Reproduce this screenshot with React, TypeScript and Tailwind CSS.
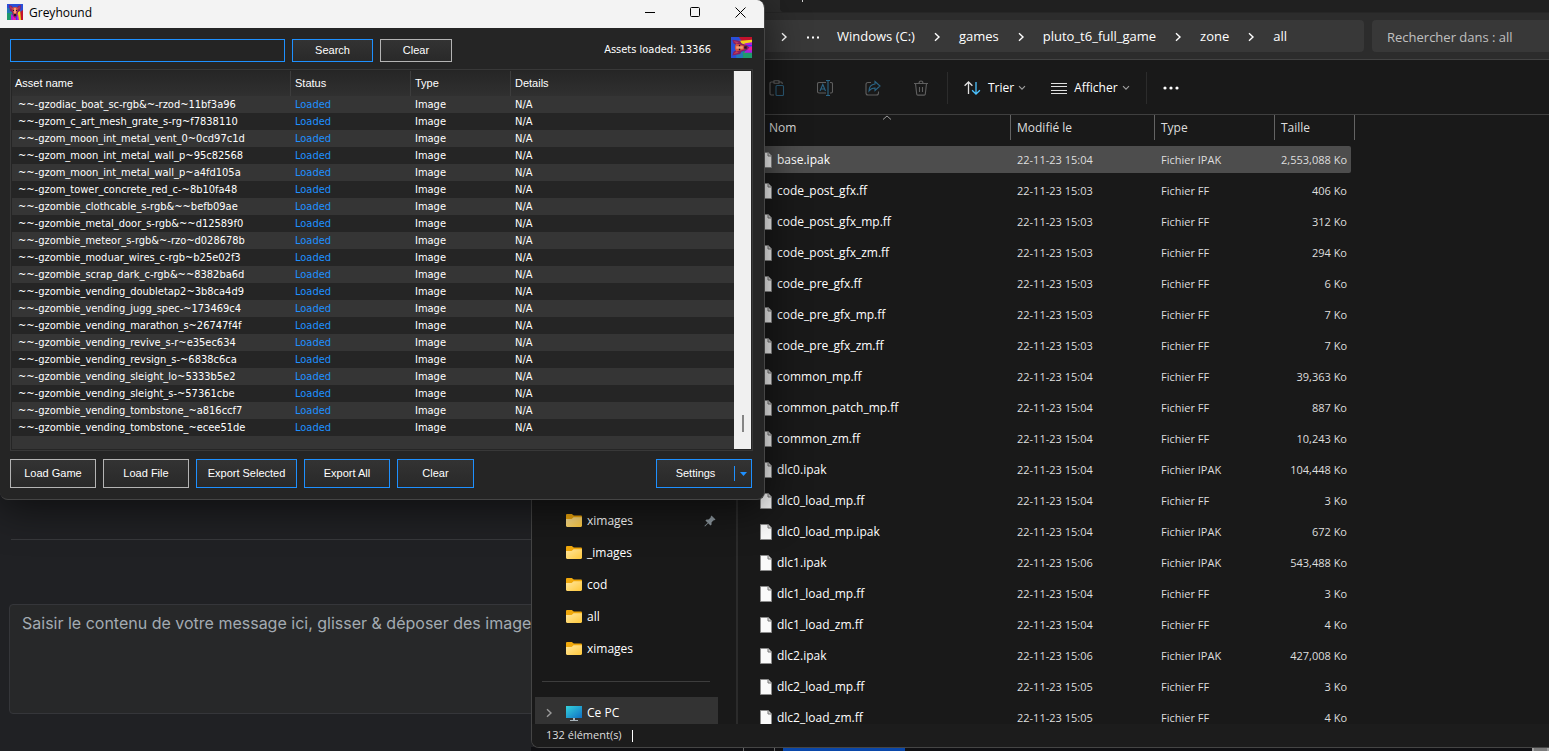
import { ReactNode } from "react";

const assets = [
  "~~-gzodiac_boat_sc-rgb&~-rzod~11bf3a96",
  "~~-gzom_c_art_mesh_grate_s-rg~f7838110",
  "~~-gzom_moon_int_metal_vent_0~0cd97c1d",
  "~~-gzom_moon_int_metal_wall_p~95c82568",
  "~~-gzom_moon_int_metal_wall_p~a4fd105a",
  "~~-gzom_tower_concrete_red_c-~8b10fa48",
  "~~-gzombie_clothcable_s-rgb&~~befb09ae",
  "~~-gzombie_metal_door_s-rgb&~~d12589f0",
  "~~-gzombie_meteor_s-rgb&~-rzo~d028678b",
  "~~-gzombie_moduar_wires_c-rgb~b25e02f3",
  "~~-gzombie_scrap_dark_c-rgb&~~8382ba6d",
  "~~-gzombie_vending_doubletap2~3b8ca4d9",
  "~~-gzombie_vending_jugg_spec-~173469c4",
  "~~-gzombie_vending_marathon_s~26747f4f",
  "~~-gzombie_vending_revive_s-r~e35ec634",
  "~~-gzombie_vending_revsign_s-~6838c6ca",
  "~~-gzombie_vending_sleight_lo~5333b5e2",
  "~~-gzombie_vending_sleight_s-~57361cbe",
  "~~-gzombie_vending_tombstone_~a816ccf7",
  "~~-gzombie_vending_tombstone_~ecee51de",
];

const files = [
  { name: "base.ipak", date: "22-11-23 15:04", type: "Fichier IPAK", size: "2,553,088 Ko" },
  { name: "code_post_gfx.ff", date: "22-11-23 15:03", type: "Fichier FF", size: "406 Ko" },
  { name: "code_post_gfx_mp.ff", date: "22-11-23 15:03", type: "Fichier FF", size: "312 Ko" },
  { name: "code_post_gfx_zm.ff", date: "22-11-23 15:03", type: "Fichier FF", size: "294 Ko" },
  { name: "code_pre_gfx.ff", date: "22-11-23 15:03", type: "Fichier FF", size: "6 Ko" },
  { name: "code_pre_gfx_mp.ff", date: "22-11-23 15:03", type: "Fichier FF", size: "7 Ko" },
  { name: "code_pre_gfx_zm.ff", date: "22-11-23 15:03", type: "Fichier FF", size: "7 Ko" },
  { name: "common_mp.ff", date: "22-11-23 15:04", type: "Fichier FF", size: "39,363 Ko" },
  { name: "common_patch_mp.ff", date: "22-11-23 15:04", type: "Fichier FF", size: "887 Ko" },
  { name: "common_zm.ff", date: "22-11-23 15:04", type: "Fichier FF", size: "10,243 Ko" },
  { name: "dlc0.ipak", date: "22-11-23 15:04", type: "Fichier IPAK", size: "104,448 Ko" },
  { name: "dlc0_load_mp.ff", date: "22-11-23 15:04", type: "Fichier FF", size: "3 Ko" },
  { name: "dlc0_load_mp.ipak", date: "22-11-23 15:04", type: "Fichier IPAK", size: "672 Ko" },
  { name: "dlc1.ipak", date: "22-11-23 15:06", type: "Fichier IPAK", size: "543,488 Ko" },
  { name: "dlc1_load_mp.ff", date: "22-11-23 15:04", type: "Fichier FF", size: "3 Ko" },
  { name: "dlc1_load_zm.ff", date: "22-11-23 15:04", type: "Fichier FF", size: "4 Ko" },
  { name: "dlc2.ipak", date: "22-11-23 15:06", type: "Fichier IPAK", size: "427,008 Ko" },
  { name: "dlc2_load_mp.ff", date: "22-11-23 15:05", type: "Fichier FF", size: "3 Ko" },
  { name: "dlc2_load_zm.ff", date: "22-11-23 15:05", type: "Fichier FF", size: "4 Ko" },
];

const crumbs = ["Windows (C:)", "games", "pluto_t6_full_game", "zone", "all"];

const folders = [
  { name: "ximages", pinned: true },
  { name: "_images" },
  { name: "cod" },
  { name: "all" },
  { name: "ximages" },
];

function HoundLogo({ className }: { className: string }) {
  return (
    <svg className={className} viewBox="0 0 16 16" aria-hidden="true">
      <rect width="16" height="16" fill="#2a4fd8" />
      <path d="M0 4h4l1 5H0z" fill="#2378b8" />
      <path d="M0 9h5l1 7H0z" fill="#1f9a6c" />
      <path d="M13 8l3-2v10h-3z" fill="#c3122c" />
      <path d="M10 10l3-5 1 11h-3z" fill="#f2d21b" />
      <path d="M4 10l4 3 3-3 1 6H4z" fill="#b01be0" />
      <path d="M6 13h2l1 3H6z" fill="#f01f9a" />
      <path d="M9 12h1v4H9z" fill="#3a3af0" />
      <path d="M2 1l3 1 1 2h4l1-2 3-1-1 6-2 1-1 4-2 2-2-2-1-4-2-1z" fill="#8a1f62" />
      <path d="M5 4l2-1h2l2 1-1 4-1 3-1 1-1-1-1-3z" fill="#d8553f" />
      <path d="M7 4h2v5H7z" fill="#f0a07a" />
      <path d="M6 6h1v1H6zM9 6h1v1H9zM7 10h2v2H7z" fill="#20102a" />
      <path d="M3 2l2 2-1 2zM13 2l-2 2 1 2z" fill="#c0405a" />
    </svg>
  );
}

function Chevron({ className = "" }: { className?: string }) {
  return (
    <svg className={`shrink-0 ${className}`} width="8" height="10" viewBox="0 0 8 10" fill="none" stroke="currentColor" strokeWidth="1.4">
      <path d="M2 1.2L6 5 2 8.8" />
    </svg>
  );
}

function ChevronSmall() {
  return (
    <svg width="8" height="6" viewBox="0 0 8 6" fill="none" stroke="#a0a0a0" strokeWidth="1.1">
      <path d="M1 1.2l3 3 3-3" />
    </svg>
  );
}

function FileIcon() {
  return (
    <svg className="shrink-0" width="12" height="16" viewBox="0 0 12 16">
      <path d="M.5.5h7.700l3.300 3.300v11.700H.5z" fill="#fafafa" stroke="#8b8b8b" />
      <path d="M8 .8V4h3.200" fill="#d6d6d6" stroke="#777" />
    </svg>
  );
}

function FolderIcon() {
  return (
    <svg className="shrink-0" width="16" height="14" viewBox="0 0 16 14">
      <defs>
        <linearGradient id="folder" x1="0" y1="0" x2="1" y2="1">
          <stop offset="0" stopColor="#ffe7a0" />
          <stop offset="1" stopColor="#ffc83a" />
        </linearGradient>
      </defs>
      <path d="M0 1.200C0 .5.5 0 1.200 0h4.600l2 1.600h7c.7 0 1.200.5 1.200 1.200V7H0z" fill="#f0a80c" />
      <path d="M0 5h5.600l2-1.800H16v8.600c0 .7-.5 1.200-1.200 1.200H1.200C.5 13 0 12.500 0 11.800z" fill="url(#folder)" />
    </svg>
  );
}

function ToolIcon({ label, children }: { label: string; children: ReactNode }) {
  return (
    <button type="button" aria-label={label} className="flex h-8 w-12 items-center justify-center">
      <svg width="16" height="16" viewBox="0 0 16 16" fill="none" stroke="#5f5f5f" strokeWidth="1.1">
        {children}
      </svg>
    </button>
  );
}

function FlatButton({ children, accent, className }: { children: ReactNode; accent?: boolean; className: string }) {
  return (
    <button
      type="button"
      className={`border bg-linear-to-b from-[#333] to-[#292929] text-center font-['Liberation_Sans',sans-serif] text-[11px] ${
        accent ? "border-[#1e90ff]" : "border-[#b4b4b4]"
      } ${className}`}
    >
      {children}
    </button>
  );
}

function ForumPage() {
  return (
    <div className="flex h-full flex-col justify-end bg-[#202124] px-[9px] pb-[37px] font-['Inter',sans-serif]">
      <hr className="ml-0.5 border-[#37383b]" />
      <textarea
        aria-label="Message"
        rows={4}
        placeholder="Saisir le contenu de votre message ici, glisser & déposer des images"
        className="mt-16 h-[110px] w-full resize-none rounded border border-[#35363a] bg-[#272829] px-3 py-1.5 text-base text-[#a3abb2] placeholder:text-[#a3abb2]"
      />
    </div>
  );
}

function Explorer() {
  return (
    <section className="absolute top-0 right-0 bottom-[3px] left-[531px] flex flex-col overflow-hidden rounded-bl-lg border-b border-l border-[#454545] bg-[#191919] font-['Open_Sans',sans-serif] text-xs text-white">
      <div className="flex h-3 shrink-0 bg-[#2c2c2c]">
        <div className="w-[248px]" />
        <div className="flex-1 rounded-bl bg-[#202020] pl-[22px]">
          <div className="h-0.5 w-px bg-[#cfcfcf]" />
        </div>
      </div>
      <div className="flex h-12 shrink-0 items-center gap-2 border-t border-b border-t-[#262626] border-b-[#434343] bg-[#2c2c2c] pl-[200px]">
        <nav className="flex h-8 flex-1 items-center rounded bg-[#383838] pt-0.5 pl-12 text-[13px] whitespace-nowrap">
          <Chevron className="mr-[19px]" />
          <svg width="12" height="3" viewBox="0 0 12 3" fill="#fff">
            <path d="M0 .5h2v2H0zM5 .5h2v2H5zM10 .5h2v2h-2z" />
          </svg>
          <ol className="ml-[18px] flex items-center">
            {crumbs.map((c, i) => (
              <li key={c} className="flex items-center">
                {i > 0 && <Chevron className="mx-[18px]" />}
                <a href="#">{c}</a>
              </li>
            ))}
          </ol>
        </nav>
        <input
          type="search"
          aria-label="Rechercher"
          placeholder="Rechercher dans : all"
          className="h-8 w-[177px] rounded-l bg-[#383838] pt-0.5 pl-[15px] text-[13px] placeholder:text-[#c0c0c0]"
        />
      </div>

      <div className="flex h-[55px] shrink-0 items-center border-b border-[#3f3f3f] pt-0.5 pl-[221px] whitespace-nowrap">
        <ToolIcon label="Coller">
          <path d="M5 2H2.200C1.500 2 1 2.500 1 3.200v10.600c0 .7.5 1.200 1.200 1.200H5M10 2h2c.7 0 1.200.5 1.200 1.200V4M5 .8h5v2.400H5z" />
          <rect x="7" y="5.500" width="7.500" height="10" rx="1" stroke="#2b5a75" />
        </ToolIcon>
        <ToolIcon label="Renommer">
          <path d="M9 2.500H2C1 2.500.5 3 .5 4v7.500c0 1 .5 1.500 1.500 1.500h7M13 2.500h1c1 0 1.500.5 1.500 1.500v7.500c0 1-.5 1.500-1.500 1.500h-1" />
          <path d="M3 11l2.800-6.500L8.500 11M4 9h3.600M9 .5h4M9 15.500h4M11 .5v15" stroke="#2b6586" />
        </ToolIcon>
        <ToolIcon label="Partager">
          <path d="M6 2.500H3c-1.200 0-2 .8-2 2V13c0 1.200.8 2 2 2h8.500c1.200 0 2-.8 2-2v-1.500" />
          <path d="M10 1.500L15 6l-5 4.500V8C7.500 8 5.500 8.800 4 11c0-4 2.200-6.500 6-7z" stroke="#2b6586" />
        </ToolIcon>
        <ToolIcon label="Supprimer">
          <path d="M1 3.500h14M2.500 3.500l1.200 10.600c.1.600.5 1 1.200 1h6.200c.7 0 1.100-.4 1.200-1l1.200-10.600M6 3.500c0-3.300 4-3.300 4 0M6.500 7v5M9.500 7v5" />
        </ToolIcon>
        <div className="ml-0.5 h-8 w-px bg-[#2c2c2c]" />
        <button type="button" className="ml-4 flex h-8 items-center">
          <svg width="17" height="14" viewBox="0 0 17 14" fill="none" strokeWidth="1.3">
            <path d="M4.500 13V1M.6 4.800L4.500 1l3.900 3.800" stroke="#e0e0e0" />
            <path d="M12 1v12M8.100 9.200L12 13l3.900-3.800" stroke="#4cc2ff" />
          </svg>
          <span className="mr-1 ml-[7px]">Trier</span>
          <ChevronSmall />
        </button>
        <button type="button" className="ml-[25px] flex h-8 items-center">
          <svg width="16" height="11" viewBox="0 0 16 11" stroke="#e0e0e0">
            <path d="M0 .5h16M0 3.500h16M0 7.500h16M0 10.500h16" />
          </svg>
          <span className="mr-1 ml-[7px]">Afficher</span>
          <ChevronSmall />
        </button>
        <div className="ml-4 h-8 w-px bg-[#2c2c2c]" />
        <button type="button" aria-label="Plus" className="ml-4 flex h-8 items-center">
          <svg width="16" height="4" viewBox="0 0 16 4" fill="#fff">
            <circle cx="2" cy="2" r="1.6" />
            <circle cx="8" cy="2" r="1.6" />
            <circle cx="14" cy="2" r="1.6" />
          </svg>
        </button>
      </div>

      <div className="flex min-h-0 flex-1">
        <aside className="flex w-[206px] shrink-0 flex-col justify-end border-r-2 border-[#2b2b2b] pr-[18px]">
          {folders.map((f, i) => (
            <a key={i} href="#" className="flex h-8 items-center gap-[5px] pr-0.5 pl-[34px]">
              <FolderIcon />
              <span className="flex-1">{f.name}</span>
              {f.pinned && (
                <svg width="12" height="12" viewBox="0 0 12 12" fill="#8c979e">
                  <path d="M7.500.5l4 4-1.200.8-1 .2-1.800 2 .1 2L6.500 10.600 4.200 8.300 1 11.600l-.6-.6 3.300-3.200L1.400 5.500l1.100-1.100 2 .1 2-1.800.2-1z" />
                </svg>
              )}
            </a>
          ))}
          <hr className="mt-4 mr-2 ml-2.5 border-[#3d3d3d]" />
          <a href="#" className="mt-[15px] ml-[3px] flex h-[27px] items-center bg-[#333] pt-1 pl-2.5">
            <Chevron className="mr-[13px] text-[#9a9a9a]" />
            <svg className="shrink-0" width="16" height="16" viewBox="0 0 16 16">
              <defs>
                <linearGradient id="screen" x1="0" y1="0" x2="1" y2="1">
                  <stop offset="0" stopColor="#35d3dc" />
                  <stop offset="1" stopColor="#0f6fc4" />
                </linearGradient>
              </defs>
              <path d="M0 1h16v12H0z" fill="url(#screen)" />
              <path d="M7 13h2v2H7zM4 15h8v1H4z" fill="#a9b4bb" />
            </svg>
            <span className="ml-[5px]">Ce PC</span>
          </a>
        </aside>

        <div className="min-w-0 flex-1 overflow-hidden">
          <table className="w-[617px] table-fixed border-separate border-spacing-0 text-left">
            <colgroup>
              <col className="w-[273px]" />
              <col className="w-36" />
              <col className="w-[120px]" />
              <col className="w-20" />
            </colgroup>
            <thead className="text-[#dedede]">
              <tr className="h-[29px]">
                <th className="relative p-0 align-top font-normal">
                  <div className="h-[25px] border-r border-[#636363] pl-[31px] leading-[25px]">Nom</div>
                  <svg className="absolute top-0 left-[144px]" width="10" height="6" viewBox="0 0 10 6" fill="none" stroke="#9a9a9a">
                    <path d="M1 4.500l4-3.500 4 3.500" />
                  </svg>
                </th>
                <th className="p-0 align-top font-normal">
                  <div className="h-[25px] border-r border-[#636363] pl-1.5 leading-[25px]">Modifié le</div>
                </th>
                <th className="p-0 align-top font-normal">
                  <div className="h-[25px] border-r border-[#636363] pl-1.5 leading-[25px]">Type</div>
                </th>
                <th className="p-0 align-top font-normal">
                  <div className="h-[25px] border-r border-[#636363] pl-1.5 leading-[25px]">Taille</div>
                </th>
              </tr>
            </thead>
            <tbody>
              {files.map((f, i) => {
                const bg = i === 0 ? "bg-[#4d4d4d]" : "";
                return (
                  <tr key={f.name} className="h-[31px] whitespace-nowrap">
                    <td className="p-0">
                      <div className={`flex h-[27px] items-center gap-[5px] pl-[22px] ${bg}`}>
                        <FileIcon />
                        {f.name}
                      </div>
                    </td>
                    <td className="p-0 text-[11px] text-[#dedede]">
                      <div className={`h-[27px] pl-1.5 leading-[27px] ${bg}`}>{f.date}</div>
                    </td>
                    <td className="p-0 text-[11px] text-[#dedede]">
                      <div className={`h-[27px] pl-1.5 leading-[27px] ${bg}`}>{f.type}</div>
                    </td>
                    <td className="p-0 text-right text-[11px] text-[#dedede]">
                      <div className={`mr-1 h-[27px] rounded-r-xs pr-1 leading-[27px] ${bg}`}>{f.size}</div>
                    </td>
                  </tr>
                );
              })}
            </tbody>
          </table>
        </div>
      </div>

      <footer className="flex h-[23px] shrink-0 items-center gap-2.5 bg-[#1c1c1c] pl-3.5 text-[11px] text-[#dedede]">
        132 élément(s)
        <span className="h-3 w-px bg-white" />
      </footer>
    </section>
  );
}

function Greyhound() {
  return (
    <section className="absolute top-0 left-0 w-[765px] overflow-hidden rounded-tr-lg rounded-b-lg border-r border-b border-[#454545] bg-[#252525] font-['DejaVu_Sans_Condensed','DejaVu_Sans',sans-serif] text-[11px] text-white shadow-[0_8px_40px_rgba(0,0,0,0.6)]">
      <header className="flex h-7 items-center bg-[#f3f3f3] pr-[18px] pb-1 pl-[7px] text-black">
        <HoundLogo className="size-4" />
        <h1 className="ml-1.5 flex-1 pt-0.5 font-['Open_Sans',sans-serif] text-xs">Greyhound</h1>
        <div className="flex items-center gap-[35px]">
          <button type="button" aria-label="Minimize">
            <svg width="10" height="11" viewBox="0 0 10 11" stroke="#000">
              <path d="M0 5.500h10" />
            </svg>
          </button>
          <button type="button" aria-label="Maximize">
            <svg width="10" height="10" viewBox="0 0 10 10" fill="none" stroke="#000">
              <rect x=".5" y=".5" width="9" height="9" rx="1" />
            </svg>
          </button>
          <button type="button" aria-label="Close">
            <svg width="11" height="11" viewBox="0 0 11 11" stroke="#000">
              <path d="M.5.5l10 10M10.500.5l-10 10" />
            </svg>
          </button>
        </div>
      </header>

      <form className="flex items-start pt-[11px] pr-3 pl-2.5">
        <input type="text" aria-label="Search assets" className="h-[23px] w-[275px] border border-[#1e90ff] bg-[#242424] px-1" />
        <FlatButton accent className="ml-[7px] h-[23px] w-[81px]">Search</FlatButton>
        <FlatButton className="ml-[7px] h-[23px] w-[72px]">Clear</FlatButton>
        <span className="ml-auto pt-[3px]">Assets loaded: 13366</span>
        <HoundLogo className="-mt-0.5 ml-5 size-[21px] -rotate-90" />
      </form>

      <div className="mr-[11px] ml-2.5 mt-[7px] flex border border-[#383838] p-px">
        <table className="flex-1 table-fixed border-separate border-spacing-0 text-left">
          <colgroup>
            <col className="w-[279px]" />
            <col className="w-[120px]" />
            <col className="w-[100px]" />
            <col />
          </colgroup>
          <thead>
            <tr className="h-[25px] bg-linear-to-b from-[#262626] to-[#303030] font-['Liberation_Sans',sans-serif]">
              <th className="border-r border-[#3d3d3d] py-0 pr-0 pl-[3px] font-normal">Asset name</th>
              <th className="border-r border-[#3d3d3d] py-0 pr-0 pl-1 font-normal">Status</th>
              <th className="border-r border-[#3d3d3d] py-0 pr-0 pl-1 font-normal">Type</th>
              <th className="border-r border-[#3d3d3d] py-0 pr-0 pl-1 font-normal">Details</th>
            </tr>
          </thead>
          <tbody>
            {assets.map((name) => (
              <tr key={name} className="h-[17px] leading-[17px] whitespace-nowrap odd:bg-[#353535]">
                <td className="py-0 pr-0 pl-1.5">{name}</td>
                <td className="py-0 pr-0 pl-1 text-[#1e90ff]">Loaded</td>
                <td className="py-0 pr-0 pl-1">Image</td>
                <td className="py-0 pr-0 pl-1">N/A</td>
              </tr>
            ))}
            <tr className="h-[13px] bg-[#353535]">
              <td colSpan={4} className="p-0" />
            </tr>
          </tbody>
        </table>
        <div className="flex w-[17px] flex-col items-center justify-end bg-[#f0f0f0] pb-[17px]">
          <div className="h-[17px] w-0.5 bg-[#858585]" />
        </div>
      </div>

      <div className="flex gap-[7px] px-2.5 pt-2 pb-[11px]">
        <FlatButton className="h-[29px] w-[86px]">Load Game</FlatButton>
        <FlatButton className="h-[29px] w-[86px]">Load File</FlatButton>
        <FlatButton accent className="h-[29px] w-[101px]">Export Selected</FlatButton>
        <FlatButton accent className="h-[29px] w-[86px]">Export All</FlatButton>
        <FlatButton accent className="h-[29px] w-[77px]">Clear</FlatButton>
        <FlatButton accent className="mr-0.5 ml-auto flex h-[29px] w-24 items-center">
          <span className="flex-1">Settings</span>
          <span className="flex h-[15px] w-[17px] items-center justify-center border-l border-[#1e90ff]">
            <svg width="7" height="4" viewBox="0 0 7 4" fill="#1e90ff">
              <path d="M0 0h7L3.500 4z" />
            </svg>
          </span>
        </FlatButton>
      </div>
    </section>
  );
}

export default function App() {
  return (
    <main className="relative h-screen overflow-hidden bg-[#202124]">
      <div className="h-full w-[600px]">
        <ForumPage />
      </div>
      <div className="absolute right-0 bottom-0 left-[531px] flex h-1 bg-[#101013]">
        <div className="ml-[212px] w-8 border-x border-[#6a6a6a]" />
        <div className="ml-2 w-[122px] bg-[#0a47a9]" />
        <div className="ml-auto w-[17px] border-x-2 border-[#a0a0a0] bg-[#7c7c7c]" />
      </div>
      <Explorer />
      <Greyhound />
    </main>
  );
}
